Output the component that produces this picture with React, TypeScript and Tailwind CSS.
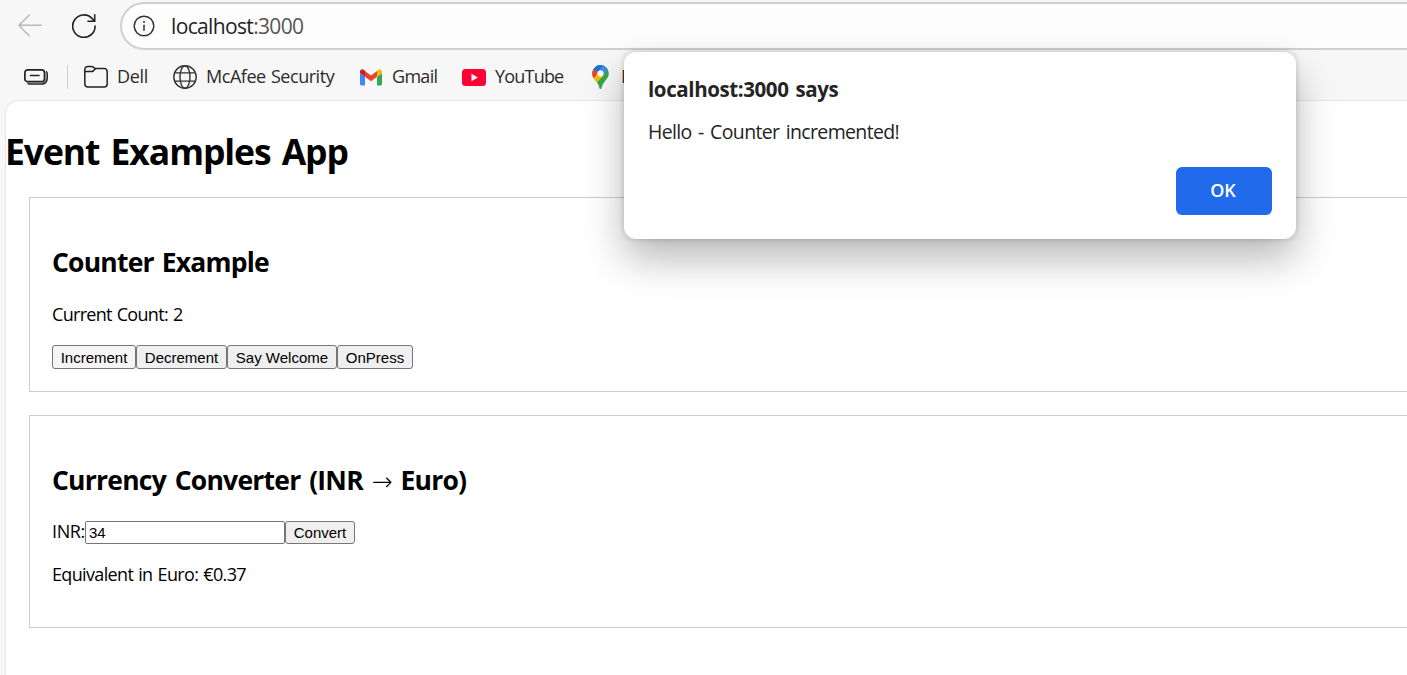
import { useState } from "react";

function BackIcon() {
  return (
    <svg className="h-6 w-6" viewBox="0 0 24 24" fill="none" stroke="#b9b9b9" strokeWidth="1.4" strokeLinecap="round" strokeLinejoin="round">
      <path d="M23.3 11.3H.8M11.3 1L.8 11.300l10.500 10.700" />
    </svg>
  );
}

function ReloadIcon() {
  return (
    <svg className="h-6 w-6" viewBox="0 0 24 24" fill="none" stroke="#222" strokeWidth="1.6" strokeLinecap="round" strokeLinejoin="round">
      <path d="M23.1 12A11.2 11.2 0 1 1 20.2 4.6L22.6 7.2" />
      <path d="M22.7.8V7.3H16" />
    </svg>
  );
}

function InfoIcon() {
  return (
    <svg className="h-[22px] w-[22px]" viewBox="0 0 22 22" fill="none" stroke="#333" strokeWidth="1.5" strokeLinecap="round">
      <circle cx="11" cy="11" r="9.8" />
      <path d="M11 10.2v5" />
      <circle cx="11" cy="6.9" r="1" fill="#333" stroke="none" />
    </svg>
  );
}

function StackIcon() {
  return (
    <svg className="h-4 w-6" viewBox="0 0 24 16" fill="none" stroke="#222" strokeLinecap="round">
      <rect x="0.9" y="0.9" width="19.600" height="11.800" rx="2.800" strokeWidth="1.700" />
      <path d="M6.500 6.500h8.500" strokeWidth="1.600" />
      <path d="M22.600 2.800c.4.600.6 1.200.6 2v4.700c0 3-2.200 5.500-5.200 5.500H6.500c-1 0-1.800-.2-2.500-.7" strokeWidth="1.500" />
      <path d="M21.700 4v5.600c0 2.600-1.600 4-4.200 4H4" stroke="#777" strokeWidth="0.900" />
    </svg>
  );
}

function FolderIcon() {
  return (
    <svg className="h-6 w-6" viewBox="0 0 24 24" fill="none" stroke="#222" strokeWidth="1.5" strokeLinejoin="round">
      <path d="M.8 5V19a3 3 0 0 0 3 3H20.200a3 3 0 0 0 3-3V6.500a3 3 0 0 0-3-3H11.200L9.300 2.100A3 3 0 0 0 7.400 1.400H3.800a3 3 0 0 0-3 3z" />
      <path d="M.8 6.600H7.600a2.500 2.500 0 0 0 1.700-.7L11.500 3.500" />
    </svg>
  );
}

function GlobeIcon() {
  return (
    <svg className="h-6 w-6" viewBox="0 0 24 24" fill="none" stroke="#333" strokeWidth="1.4">
      <circle cx="12" cy="12" r="11.200" />
      <ellipse cx="12" cy="12" rx="5" ry="11.200" />
      <path d="M1.700 7.900H22.300M1.700 16.100H22.300" />
    </svg>
  );
}

function GmailIcon() {
  return (
    <svg className="h-[17px] w-[22px]" viewBox="0 0 22 17">
      <path fill="#4285f4" d="M0 4l5 3.800V16.500H1.500A1.500 1.500 0 0 1 0 15z" />
      <path fill="#34a853" d="M17 7.800L22 4V15a1.500 1.500 0 0 1-1.500 1.500H17z" />
      <path fill="#ea4335" d="M5 2L11 6.500 17 2V7.800L11 12.300 5 7.800z" />
      <path fill="#c5221f" d="M0 2.600C0 .4 2.400-.5 4 .900L5 1.700V7.800L0 4z" />
      <path fill="#fbbc04" d="M22 2.600C22 .4 19.600-.5 18 .900L17 1.700V7.800L22 4z" />
    </svg>
  );
}

function YouTubeIcon() {
  return (
    <svg className="h-[17px] w-6" viewBox="0 0 24 17">
      <rect width="24" height="17" rx="3.500" fill="#ff0033" />
      <path fill="#fff" d="M9.500 4.800V12.200L15.800 8.500z" />
    </svg>
  );
}

function MapsIcon() {
  return (
    <svg className="h-6 w-[17px]" viewBox="0 0 17 24">
      <clipPath id="pin">
        <path d="M8.500 0A8.300 8.300 0 0 0 .2 8.300C.2 11.500 1.700 13.200 3.500 15.500 5.500 18 6.600 19.700 7.300 22.500 7.600 23.600 7.900 24 8.500 24S9.400 23.600 9.700 22.500C10.400 19.700 11.500 18 13.500 15.500 15.300 13.200 16.800 11.500 16.800 8.300A8.300 8.300 0 0 0 8.500 0z" />
      </clipPath>
      <g clipPath="url(#pin)">
        <path fill="#34a853" d="M0 0H17V24H0z" />
        <path fill="#fbbc04" d="M0 14L6 6.500 12 10 3.500 19 0 17z" />
        <path fill="#ea4335" d="M-1 3L2.200 3 7 7 1.500 13.400-1 12z" />
        <path fill="#1a73e8" d="M2 3.200L5 -1 11 0 6 8z" />
        <path fill="#4285f4" d="M11 .300L15.900 4.300 11.500 9.500 5.500 8z" />
      </g>
      <circle cx="8.500" cy="8.300" r="3.100" fill="#fff" />
    </svg>
  );
}

const buttonClass =
  "shrink-0 rounded-[3px] border border-[#767676] pt-px text-center font-['Liberation_Sans',Arial,sans-serif] text-[15px] whitespace-nowrap text-black";

export default function App() {
  const [count, setCount] = useState(2);
  const [inr, setInr] = useState("34");
  const [euro, setEuro] = useState("0.37");
  const [open, setOpen] = useState(true);

  return (
    <div className="relative flex h-[675px] w-full flex-col overflow-hidden bg-[#f7f7f7] font-['Open_Sans','Noto_Sans',sans-serif] text-black">
      <header className="h-[100px] shrink-0">
        <div className="flex h-[52px] pl-[18px]">
          <div className="flex h-[52px] items-center gap-[30px]">
            <BackIcon />
            <ReloadIcon />
          </div>
          <div className="mt-[2px] ml-6 flex h-12 flex-1 items-center rounded-l-full border-2 border-r-0 border-[#d0d0d0] bg-[#fdfdfd] pl-[11px]">
            <InfoIcon />
            <span className="mb-px ml-4 text-[21px] leading-6 tracking-[-0.65px] text-[#555]">
              <span className="text-[#1f1f1f]">localhost</span>:3000
            </span>
          </div>
        </div>
        <nav className="flex h-[50px] items-center pl-6 text-[18px] leading-[22px] whitespace-nowrap text-[#2b2b2b]">
          <StackIcon />
          <span className="ml-[19px] h-6 w-px bg-[#cfcfcf]" />
          <span className="ml-4 flex w-[89px] items-center gap-[9px] tracking-[-0.3px]"><FolderIcon /><span className="pb-0.5">Dell</span></span>
          <span className="flex w-[187px] items-center gap-[9px] tracking-[-0.46px] [word-spacing:1px]"><GlobeIcon /><span className="pb-0.5">McAfee Security</span></span>
          <span className="flex w-[102px] items-center gap-[10px] tracking-[-0.7px]"><GmailIcon /><span className="pb-0.5">Gmail</span></span>
          <span className="flex w-[130px] items-center gap-[9px] tracking-[-0.8px]"><YouTubeIcon /><span className="pb-0.5">YouTube</span></span>
          <span className="flex items-center gap-3"><MapsIcon /><span className="pb-0.5">Maps</span></span>
        </nav>
      </header>

      <main className="ml-[5px] flex-1 rounded-tl-[13px] border-t border-l border-[#e6e6e6] bg-white">
        <h1 className="mt-[26px] -ml-px h-12 text-[35.500px] leading-[48px] font-bold tracking-[-1.08px] [word-spacing:3px]">Event Examples App</h1>

        <section className="mt-[22px] ml-[23px] h-[195px] border border-r-0 border-[#ccc] pl-[22px]">
          <h2 className="mt-[46px] h-9 text-[26.500px] leading-9 font-bold tracking-[-0.8px] [word-spacing:2px]">Counter Example</h2>
          <p className="mt-[22px] h-6 text-[18px] leading-6 tracking-[-0.7px] [word-spacing:1px]">Current Count: {count}</p>
          <div className="mt-[19px] flex">
            <button className={`${buttonClass} h-6 w-[84px] border-[#8b8b8b] bg-[#f5f5f5] leading-[22px]`} onClick={() => { setCount(count + 1); setOpen(true); }}>Increment</button>
            <button className={`${buttonClass} h-6 w-[91px] bg-[#efefef] leading-[22px]`} onClick={() => setCount(count - 1)}>Decrement</button>
            <button className={`${buttonClass} h-6 w-[110px] bg-[#efefef] leading-[22px]`}>Say Welcome</button>
            <button className={`${buttonClass} h-6 w-[76px] bg-[#efefef] leading-[22px]`}>OnPress</button>
          </div>
        </section>

        <section className="mt-[23px] ml-[23px] h-[213px] border border-r-0 border-[#ccc] pl-[22px]">
          <h2 className="mt-[46px] h-9 text-[26.500px] leading-9 font-bold tracking-[-0.77px] whitespace-nowrap [word-spacing:2.600px]">
            Currency Converter (INR <span className="font-['DejaVu_Sans',sans-serif] text-[25px] font-extralight">→</span> Euro)
          </h2>
          <form className="mt-[23px] flex h-6" onSubmit={(e) => { e.preventDefault(); setEuro((Number(inr) * 0.011).toFixed(2)); }}>
            <label className="-mt-0.5 w-[33px] text-[18px] leading-6 tracking-[-0.4px]" htmlFor="inr">INR:</label>
            <input id="inr" value={inr} onChange={(e) => setInr(e.target.value)} className="h-[23px] w-[200px] rounded-[2px] border border-[#767676] bg-white px-[3px] font-['Liberation_Sans',Arial,sans-serif] text-[15px]" />
            <button className={`${buttonClass} h-[23px] w-[70px] bg-[#efefef] leading-5`}>Convert</button>
          </form>
          <p className="mt-[17px] h-6 text-[18px] leading-6 tracking-[-0.65px] [word-spacing:1px]">Equivalent in Euro: €{euro}</p>
        </section>
      </main>

      {open && (
        <div role="dialog" className="absolute top-[52px] left-[624px] flex h-[187px] w-[672px] flex-col rounded-xl bg-white px-6 pt-[23px] text-[#242424] shadow-[0_20px_40px_rgba(0,0,0,0.28),0_0_6px_rgba(0,0,0,0.2)]">
          <h3 className="h-7 text-[20.500px] leading-7 font-bold tracking-[-0.4px] [word-spacing:2px]">localhost:3000 says</h3>
          <p className="mt-[15px] h-7 text-[19.500px] leading-7 tracking-[-0.65px] [word-spacing:2px]">Hello - Counter incremented!</p>
          <button onClick={() => setOpen(false)} className="mt-[21px] h-12 w-24 self-end rounded-md bg-[#216aeb] pr-0.5 pb-0.5 text-[18px] leading-6 font-semibold text-white">OK</button>
        </div>
      )}
    </div>
  );
}
